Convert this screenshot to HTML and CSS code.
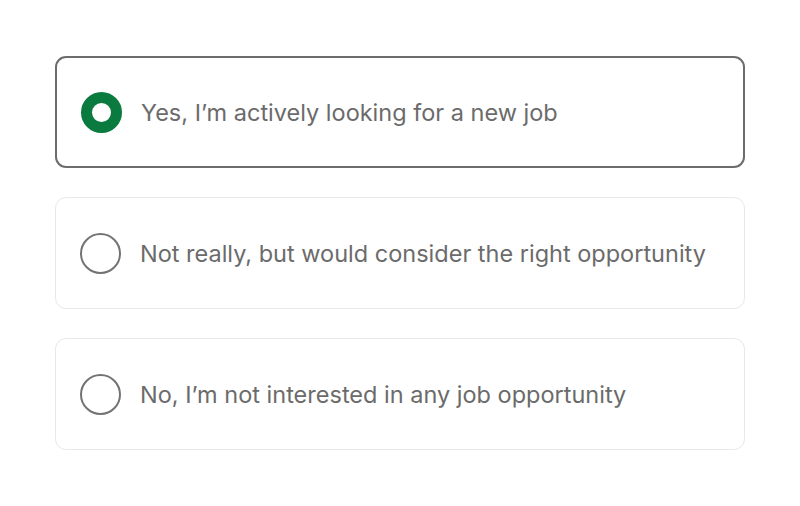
FILE: index.html
```html
<!DOCTYPE html>
<html lang="en">
<head>
    <meta charset="UTF-8">
    <meta name="viewport" content="width=device-width, initial-scale=1.0">
    <title>Job search status</title>
    <link rel="stylesheet" href="styles.css">
</head>
<body>
    <div class="options">
        <label class="option selected">
            <span class="radio"></span>
            <span class="label">Yes, I’m actively looking for a new job</span>
        </label>
        <label class="option">
            <span class="radio"></span>
            <span class="label">Not really, but would consider the right opportunity</span>
        </label>
        <label class="option">
            <span class="radio"></span>
            <span class="label">No, I’m not interested in any job opportunity</span>
        </label>
    </div>
</body>
</html>
```

FILE: styles.css
```css
body {
    margin: 0;
    background: #fff;
    font-family: Inter, "Liberation Sans", Arial, sans-serif;
}

.options {
    padding: 56px 55px 0 55px;
    display: flex;
    flex-direction: column;
    gap: 29px;
}

.option {
    box-sizing: border-box;
    height: 112px;
    display: flex;
    align-items: center;
    gap: 19px;
    padding: 0 24px;
    border: 1.5px solid #e8e8e8;
    border-radius: 11px;
    cursor: pointer;
}

.option.selected {
    border: 2px solid #6c6c6c;
}

.radio {
    box-sizing: border-box;
    width: 41px;
    height: 41px;
    flex-shrink: 0;
    border: 2px solid #737373;
    border-radius: 50%;
}

.option.selected .radio {
    border: 11px solid #0b7a3f;
}

.label {
    font-size: 23.5px;
    color: #6b6b6b;
}
```
